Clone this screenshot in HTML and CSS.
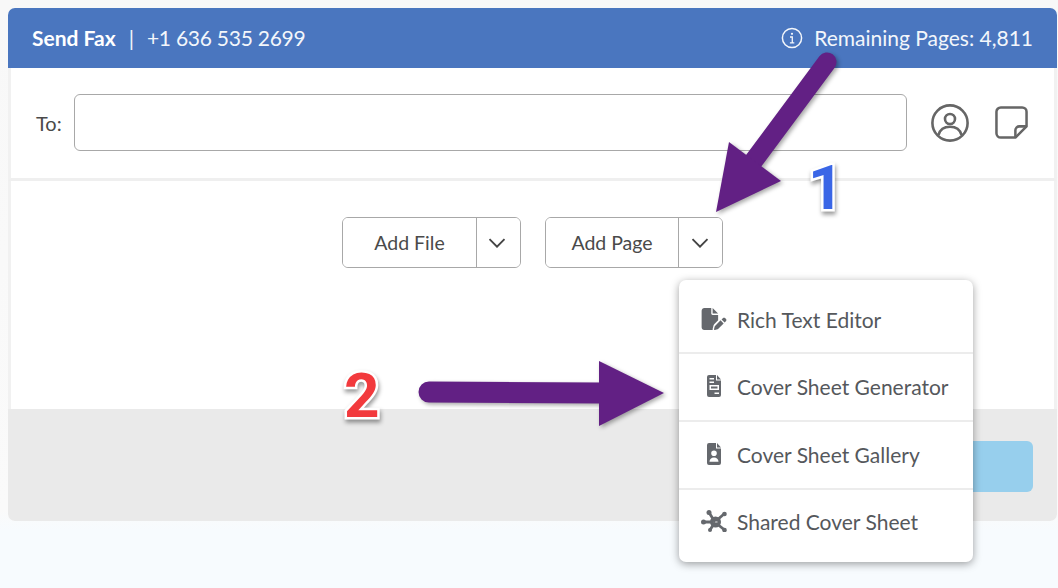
FILE: index.html
```html
<!DOCTYPE html>
<html lang="en">
<head>
<meta charset="utf-8">
<title>Send Fax</title>
<link rel="stylesheet" href="styles.css">
</head>
<body>
<main class="card">
  <header class="head">
    <div class="head-left"><strong>Send Fax</strong><span class="sep">|</span><span class="fax-no">+1 636 535 2699</span></div>
    <div class="head-right">
      <svg class="info" viewBox="0 0 22 22" fill="none" stroke="currentColor"><circle cx="11" cy="11" r="9.6" stroke-width="1.5"/><circle cx="11" cy="6.8" r="1.1" fill="currentColor" stroke="none"/><path d="M9 10h2.3v5.6M8.900 15.800h4.400" stroke-width="1.3"/></svg>
      <span>Remaining Pages: 4,811</span>
    </div>
  </header>
  <section class="to-row">
    <label class="to-label" for="to">To:</label>
    <input class="to-input" id="to" type="text">
    <svg class="person" viewBox="0 0 38 38" fill="none" stroke="currentColor" stroke-width="2.6"><circle cx="19" cy="19" r="17.600"/><circle cx="19" cy="15" r="5"/><path d="M7.500 31c1.500-5.500 6-8.200 11.500-8.200S29 25.500 30.500 31"/></svg>
    <svg class="note" viewBox="0 0 34 34" fill="none" stroke="currentColor" stroke-width="2.6" stroke-linejoin="round"><path d="M21 32.500H6a4.500 4.500 0 0 1-4.500-4.500V6A4.500 4.500 0 0 1 6 1.500h22A4.500 4.500 0 0 1 32.500 6v15z"/><path d="M21 32.500V25a4 4 0 0 1 4-4h7.500"/></svg>
  </section>
  <section class="actions">
    <div class="split"><button class="split-main file">Add File</button><button class="split-caret"><svg viewBox="0 0 18 10" fill="none" stroke="currentColor" stroke-width="1.9"><path d="M1.500 1.200 9 8.700l7.500-7.500"/></svg></button></div>
    <div class="split"><button class="split-main page">Add Page</button><button class="split-caret wide"><svg viewBox="0 0 18 10" fill="none" stroke="currentColor" stroke-width="1.9"><path d="M1.500 1.200 9 8.700l7.500-7.500"/></svg></button></div>
  </section>
  <footer class="foot"><button class="send" aria-label="Send"></button></footer>
</main>

<ul class="menu">
  <li class="menu-item first">
    <svg class="mi" viewBox="0 0 576 512" fill="currentColor"><path d="M0 64C0 28.700 28.700 0 64 0H224V128c0 17.700 14.300 32 32 32H384V285.700l-86.800 86.800c-10.300 10.300-17.500 23.100-21 37.200l-18.700 74.900c-2.300 9.200-1.800 18.800 1.300 27.500H64c-35.300 0-64-28.700-64-64V64zm384 64H256V0L384 128zM549.800 235.700l14.400 14.400c15.600 15.600 15.600 40.900 0 56.600l-29.400 29.400-71-71 29.400-29.400c15.600-15.600 40.900-15.600 56.600 0zM311.900 417L441.100 287.800l71 71L382.900 487.900c-4.100 4.100-9.200 7-14.900 8.400l-60.100 15c-5.500 1.400-11.200-.2-15.200-4.200s-5.600-9.700-4.200-15.200l15-60.100c1.400-5.600 4.300-10.800 8.400-14.900z"/></svg>
    <span>Rich Text Editor</span>
  </li>
  <li class="menu-item">
    <svg class="mi" viewBox="0 0 26 22" fill="currentColor"><path fill-rule="evenodd" d="M8 0h7v5.500h5V20a2 2 0 0 1-2 2H8a2 2 0 0 1-2-2V2a2 2 0 0 1 2-2zM16 0l4 4.500h-4zM8.500 3v1.500h4.500V3zM8.500 6.500V8h4.500V6.500zM8.500 10v5h9.500v-5zM10 11.500h6.500v2H10zM13.500 17.500V19H18v-1.500z"/></svg>
    <span>Cover Sheet Generator</span>
  </li>
  <li class="menu-item">
    <svg class="mi" viewBox="0 0 26 22" fill="currentColor"><path fill-rule="evenodd" d="M8 0h7v5.500h5V20a2 2 0 0 1-2 2H8a2 2 0 0 1-2-2V2a2 2 0 0 1 2-2zM16 0l4 4.500h-4zM13 7.500a2.800 2.800 0 1 0 0 5.600 2.800 2.800 0 0 0 0-5.600zM8.500 18.800h9c0-2.600-1.800-4.300-4.500-4.300s-4.500 1.700-4.500 4.300z"/></svg>
    <span>Cover Sheet Gallery</span>
  </li>
  <li class="menu-item last">
    <svg class="mi" viewBox="0 0 26 22" fill="currentColor" stroke="currentColor"><path fill="none" stroke-width="2.800" d="M3 12h9M8 2.500l6 9.500M23 4L15 11M23 19.500L15 13M9 20l5-8"/><circle cx="14.500" cy="12" r="3.800" fill="none" stroke-width="3.400"/><g stroke="none"><circle cx="2.500" cy="12" r="2.500"/><circle cx="8" cy="2.500" r="2.500"/><circle cx="23.500" cy="4" r="2.300"/><circle cx="23.500" cy="20" r="2.300"/><circle cx="9" cy="20" r="2"/></g></svg>
    <span>Shared Cover Sheet</span>
  </li>
</ul>

<svg class="arrows" viewBox="0 0 1058 588" fill="#622084" aria-hidden="true">
  <path d="M827 62 L752 163" stroke="#622084" stroke-width="19" stroke-linecap="round" fill="none"/>
  <path d="M729 142 L781 181 L716 212z"/>
  <path d="M429 392 L602 393" stroke="#622084" stroke-width="21" stroke-linecap="round" fill="none"/>
  <path d="M599 361 L664 393 L599 426z"/>
</svg>
<span class="num one">1</span>
<span class="num two">2</span>
</body>
</html>
```
FILE: styles.css
```css
* { box-sizing: border-box; }
html, body { height: 100%; }
body {
  margin: 0;
  padding: 8px 1px 0 8px;
  background: linear-gradient(#f8f8f8 0, #f8f8f8 8px, #fafafa 510px, #f7fbfe 530px);
  font-family: Lato, "Liberation Sans", sans-serif;
  color: #484848;
  overflow: hidden;
}
button { font: inherit; color: inherit; background: #fff; padding: 0; }
.card {
  background: #fff;
  border-radius: 7px;
  overflow: hidden;
}
.head {
  height: 60px;
  background: #4a76bf;
  display: flex;
  align-items: center;
  justify-content: space-between;
  padding: 0 24px 1px 24px;
  font-size: 21px;
  color: #f3f6fb;
}
.head-left { display: flex; align-items: center; }
.head-left strong { font-weight: 700; color: #fff; }
.sep { margin: 0 13px; }
.fax-no { letter-spacing: -.25px; }
.head-right { display: flex; align-items: center; gap: 11px; }
.info { width: 22px; height: 22px; }
.to-row {
  height: 113px;
  display: flex;
  align-items: center;
  border-left: 3px solid #f1f1f1;
  border-right: 3px solid #f1f1f1;
  border-bottom: 3px solid #efefef;
  padding: 0 26px 1px 25px;
}
.to-label { font-size: 20px; color: #4a4a4a; width: 38px; }
.to-input {
  flex: 1;
  height: 57px;
  border: 1px solid #a8a8a8;
  border-radius: 6px;
  background: #fff;
  margin-right: 24px;
}
.person { width: 38px; height: 38px; color: #666; flex: none; }
.note { width: 33px; height: 33px; color: #666; flex: none; margin-left: 26px; }
.actions {
  height: 228px;
  padding-top: 36px;
  display: flex;
  justify-content: center;
  align-items: flex-start;
  gap: 24px;
  border-left: 3px solid #f1f1f1;
  border-right: 3px solid #f1f1f1;
}
.split {
  display: flex;
  height: 51px;
  border: 1px solid #a8a8a8;
  border-radius: 6px;
  overflow: hidden;
}
.split-main { border: 0; font-size: 19.5px; color: #4a4a4a; }
.file { width: 133px; }
.page { width: 132px; }
.split-caret {
  width: 44px;
  border: 0;
  border-left: 1px solid #a8a8a8;
  display: flex;
  align-items: center;
  justify-content: center;
  padding-right: 3px;
  color: #444;
}
.split-caret.wide { padding-right: 1px; }
.split-caret svg { width: 18px; height: 10px; }
.foot {
  height: 112px;
  background: #eaeaea;
  padding: 32px 24px 0 0;
  display: flex;
  justify-content: flex-end;
  align-items: flex-start;
}
.send {
  width: 170px;
  height: 51px;
  border: 0;
  border-radius: 6px;
  background: #97cfed;
}
.menu {
  position: absolute;
  left: 679px;
  top: 280px;
  width: 294px;
  height: 282px;
  margin: 0;
  padding: 0;
  list-style: none;
  background: #fff;
  border-radius: 7px;
  box-shadow: 0 2px 8px rgba(0,0,0,.38);
  display: grid;
  grid-template-rows: 74px 68px 68px 72px;
}
.menu-item {
  display: flex;
  align-items: center;
  font-size: 21px;
  color: #55585c;
  padding: 0 0 2px 22px;
  border-bottom: 2px solid #ececec;
}
.menu-item.first { padding-bottom: 0; padding-top: 6px; }
.menu-item.last { border-bottom: 0; padding-bottom: 10px; }
.menu-item span { margin-left: 10px; }
.mi { width: 26px; height: 22px; color: #65686d; flex: none; }
.arrows {
  position: absolute;
  left: 0;
  top: 0;
  width: 1058px;
  height: 588px;
  pointer-events: none;
  filter: drop-shadow(2px 2px 2px rgba(0,0,0,.35));
}
.num {
  position: absolute;
  font-family: Roboto, "Liberation Sans", sans-serif;
  font-weight: 700;
  font-size: 62px;
  line-height: 1;
  -webkit-text-stroke: 5px #fff;
  paint-order: stroke fill;
  filter: drop-shadow(1px 3px 2px rgba(0,0,0,.4));
}
.one { left: 808px; top: 157px; color: #3a66e6; }
.two { left: 344px; top: 365px; color: #f23a3d; }
```
